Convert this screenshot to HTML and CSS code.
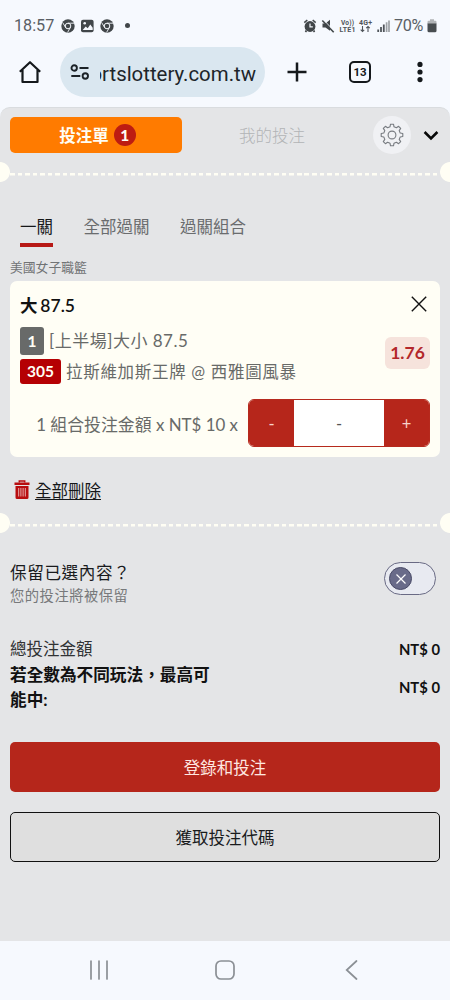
FILE: index.html
```html
<!DOCTYPE html>
<html lang="zh-Hant">
<head>
<meta charset="utf-8">
<title>投注單</title>
<link rel="stylesheet" href="styles.css">
</head>
<body>
<div class="screen">
  <header class="status">
    <span class="clock">18:57</span>
    <svg class="status-left" width="68" height="16" viewBox="0 0 68 16">
      <g id="chrome"><circle cx="7" cy="8" r="6.7" fill="#414649"/><circle cx="7" cy="8" r="2.8" fill="none" stroke="#f6f9fe" stroke-width="1"/><path d="M7 5.2h6M4.6 9.4 1.6 4.5M9.4 9.4 6.6 14.4" stroke="#f6f9fe" stroke-width=".9"/></g>
      <rect x="20" y="1.800" width="12.600" height="12.400" rx="2" fill="#414649"/><circle cx="23.700" cy="5.200" r="1.300" fill="#f6f9fe"/><path d="m21.700 12 3-3.600 2 1.800 2.600-3.700 2.400 3.300V12z" fill="#f6f9fe"/>
      <use href="#chrome" x="39"/>
    </svg>
    <i class="status-dot"></i>
    <svg class="status-right" width="88" height="18" viewBox="0 0 88 18">
      <g fill="#414649"><circle cx="7" cy="9.500" r="5.400"/><path d="m.8 5 3-2.600 1 1.200-3 2.600zM13.200 5l-3-2.600-1 1.200 3 2.600zM2.500 13l1.600 1.200-1 1.200-1.300-1zM11.500 13l-1.600 1.200 1 1.200 1.300-1z"/></g>
      <path d="M7 6.500v3.300h2.800" fill="none" stroke="#f6f9fe" stroke-width="1.200"/>
      <path d="M19.500 6.500h3l4.500-3.700v11l-4.500-3.400h-3z" fill="#414649"/><path d="m20.600 3 11 11.300" stroke="#f6f9fe" stroke-width="1"/><path d="m19.300 3.500 11.400 11.700" stroke="#414649" stroke-width="1.600"/>
      <g font-family="Roboto, sans-serif" font-weight="700" fill="#50555a"><text x="38" y="7.800" font-size="6.600" textLength="13">Vo))</text><text x="36.500" y="15" font-size="7" textLength="16">LTE1</text><text x="56" y="7.800" font-size="7" textLength="13">4G+</text></g>
      <path d="M59.500 9v5.500m-1.800-1.800 1.800 1.800 1.700-1.700M65 15V9.500m-1.800 1.700L65 9.500l1.800 1.700" fill="none" stroke="#50555a" stroke-width="1.100"/>
      <path d="M75.200 12.500V15M78 10v5M80.800 7.500V15" stroke="#50555a" stroke-width="1.800"/><path d="M83.600 5.300V15M86 3.500V15" stroke="#9da1a5" stroke-width="1.700"/>
    </svg>
    <span class="percent">70%</span>
    <svg width="10" height="16" viewBox="0 0 10 16"><path d="M3 1.200h4v1.500h1.300q1.200 0 1.200 1.200V6H.5V3.900q0-1.200 1.200-1.200H3z" fill="#b1b4b7"/><path d="M.5 5.500h9v7.300q0 1.500-1.500 1.500H2Q.5 14.300.5 12.800z" fill="#484d50"/></svg>
  </header>

  <nav class="browser">
    <svg class="home" width="24" height="24" viewBox="0 0 24 24"><path d="M1.800 11.700 12 2.200l10.200 9.500M4.500 10v12h15V10" fill="none" stroke="#15191c" stroke-width="2.200" stroke-linejoin="round"/></svg>
    <div class="address">
      <svg width="20" height="16" viewBox="0 0 20 16" fill="none" stroke="#1b2227" stroke-width="1.900"><circle cx="4.200" cy="4" r="2.700"/><path d="M9.500 4h9M1.300 12h9"/><circle cx="15.300" cy="12" r="2.700"/></svg>
      <span class="url"><span>ortslottery.com.tw</span></span>
    </div>
    <svg class="plus" width="20" height="20" viewBox="0 0 20 20"><path d="M10 .5v19M.5 10h19" stroke="#15191c" stroke-width="2.500"/></svg>
    <span class="tabs-count">13</span>
    <svg class="more" width="6" height="22" viewBox="0 0 6 22" fill="#15191c"><circle cx="3" cy="3.400" r="2.600"/><circle cx="3" cy="11" r="2.600"/><circle cx="3" cy="18.600" r="2.600"/></svg>
  </nav>

  <main class="page">
    <div class="slip-head">
      <div class="slip-tab">投注單<b class="count">1</b></div>
      <div class="my-bets">我的投注</div>
      <div class="gear"><svg width="24" height="24" viewBox="-12 -12 24 24" fill="none" stroke="#777b80" stroke-width="1.100" stroke-linejoin="round"><circle r="3.900"/><path d="M-2-8.200-1.500-10.800H1.500L2-8.200 4.400-7.200 6.600-8.700 8.700-6.600 7.200-4.400 8.200-2 10.800-1.500V1.500L8.200 2 7.200 4.400 8.700 6.600 6.600 8.700 4.400 7.200 2 8.200 1.500 10.800H-1.500L-2 8.200-4.400 7.200-6.600 8.700-8.700 6.600-7.200 4.400-8.200 2-10.800 1.500V-1.500L-8.200-2-7.200-4.400-8.700-6.600-6.600-8.700-4.400-7.200Z"/></svg></div>
      <svg class="chev" width="16" height="11" viewBox="0 0 16 11"><path d="m1.600 2 6.400 6.400L14.400 2" fill="none" stroke="#080808" stroke-width="2.600"/></svg>
    </div>
    <div class="perforation"></div>

    <div class="modes">
      <span class="mode active">一關</span><span class="mode">全部過關</span><span class="mode">過關組合</span>
    </div>
    <div class="league">美國女子職籃</div>

    <section class="card">
      <div class="card-title"><b>大 87.5</b><svg width="16" height="16" viewBox="0 0 16 16"><path d="m.8.800 14.400 14.400M15.200.800.800 15.200" stroke="#111" stroke-width="1.400"/></svg></div>
      <div class="pick">
        <div class="pick-lines">
          <div class="pick-line"><b class="tag gray">1</b><span class="market">[上半場]大小 87.5</span></div>
          <div class="pick-line second"><b class="tag red">305</b><span class="teams">拉斯維加斯王牌 @ 西雅圖風暴</span></div>
        </div>
        <b class="odds">1.76</b>
      </div>
      <div class="stake">
        <span class="stake-label">1 組合投注金額 x NT$ 10 x</span>
        <div class="stepper"><span class="step">-</span><span class="amount">-</span><span class="step">+</span></div>
      </div>
    </section>

    <div class="clear">
      <svg width="16" height="20" viewBox="0 0 16 20"><path d="M5.300 2.500V1h5.400v1.500" fill="none" stroke="#b80d10" stroke-width="1.500"/><path d="M.5 2.500h15V5H.5zM1.500 6h13v11.500q0 1.500-1.500 1.500H3q-1.500 0-1.500-1.500z" fill="#b80d10"/><path d="M4.700 8v8.500M6.900 8v8.500M9.100 8v8.500M11.300 8v8.500" stroke="#f3d6d6" stroke-width=".8"/></svg>
      <span>全部刪除</span>
    </div>
    <div class="perforation lower"></div>

    <div class="keep">
      <div><div class="keep-title">保留已選內容？</div><div class="keep-sub">您的投注將被保留</div></div>
      <div class="toggle"><span class="knob"><svg width="12" height="12" viewBox="0 0 12 12"><path d="m1.500 1.500 9 9M10.500 1.500l-9 9" stroke="#fff" stroke-width="1.200"/></svg></span></div>
    </div>

    <div class="totals">
      <div class="total"><span>總投注金額</span><b>NT$ 0</b></div>
      <div class="total max"><strong>若全數為不同玩法，最高可能中:</strong><b>NT$ 0</b></div>
    </div>
    <div class="button primary">登錄和投注</div>
    <div class="button outline">獲取投注代碼</div>
  </main>

  <footer class="system-nav">
    <svg width="20" height="20" viewBox="0 0 20 20"><path d="M2 1v18M10 1v18M18 1v18" stroke="#8b9095" stroke-width="1.700" stroke-linecap="round"/></svg>
    <svg width="20" height="20" viewBox="0 0 20 20"><rect x="1" y="1" width="18" height="18" rx="5" fill="none" stroke="#8b9095" stroke-width="1.700"/></svg>
    <svg width="20" height="20" viewBox="0 0 20 20"><path d="M15.500 1 5.700 10l9.800 9" fill="none" stroke="#8b9095" stroke-width="1.700" stroke-linecap="round"/></svg>
  </footer>
</div>
</body>
</html>
```
FILE: styles.css
```css
* { box-sizing: border-box; }
body { margin: 0; background: #f6f9fe; }
svg { display: block; flex: none; }
.screen { width: 450px; height: 1000px; display: flex; flex-direction: column; overflow: hidden; font-family: Lato, "Noto Sans CJK TC", sans-serif; font-size: 16.5px; white-space: nowrap; }

.status { height: 36px; padding: 15px 13px 0 14px; display: flex; align-items: center; font: 16.2px/22px Roboto, sans-serif; color: #5a6065; }
.clock { width: 47px; }
.status-left { width: 68px; }
.status-dot { width: 5px; height: 5px; margin-left: -4px; border-radius: 50%; background: #414649; }
.status-right { margin-left: auto; margin-right: -1px; }
.percent { margin: 0 2px 0 4px; width: 31px; letter-spacing: -.4px; }

.browser { height: 71px; padding: 0 27px 0 18px; display: flex; align-items: center; }
.address { width: 205px; height: 50px; margin-left: 18px; padding: 0 9px 0 10px; display: flex; align-items: center; background: #dae7f0; border-radius: 25px; }
.url { width: 156px; margin: 4px 0 0 10px; overflow: hidden; display: flex; justify-content: flex-end; font: 20.400px/28px Roboto, sans-serif; color: #1d252a; }
.plus { margin-left: 22px; }
.tabs-count { width: 22px; height: 22px; margin-left: 42px; border: 2px solid #15191c; border-radius: 5px; font: 700 11.5px/18px Roboto, sans-serif; text-align: center; color: #15191c; }
.more { margin-left: auto; }

.page { height: 834px; background: #e4e5e7; border-top: 1px solid #d9dcdf; border-radius: 10px 10px 0 0; }
.slip-head { height: 54px; padding: 0 11px 0 10px; display: flex; align-items: center; }
.slip-tab { width: 172px; height: 36px; background: #ff7b00; border-radius: 5px; color: #fffdf4; font-weight: 700; display: flex; align-items: center; justify-content: center; gap: 5px; padding-left: 3px; }
.count { width: 22px; height: 22px; border-radius: 50%; background: #bd1c12; font-size: 15.5px; line-height: 22px; text-align: center; }
.my-bets { width: 180px; text-align: center; color: #b2b4b6; font-weight: 300; }
.gear { width: 38px; height: 38px; margin-left: 11px; border-radius: 50%; background: #f0f1f4; display: grid; place-items: center; }
.chev { margin-left: auto; }

.perforation { height: 20px; background: radial-gradient(circle at 0 10px, #fffef4 9.500px, transparent 10.300px), radial-gradient(circle at 450px 10px, #fffef4 9.500px, transparent 10.300px), repeating-linear-gradient(90deg, #fffef4 0 4.600px, transparent 4.600px 7.550px) 10px 11px / 430px 2.500px no-repeat; }

.modes { height: 76px; padding: 32px 0 0 20px; display: flex; gap: 30.500px; color: #6a6c6e; line-height: 26px; }
.mode { height: 33px; }
.mode.active { height: 33px; color: #151719; border-bottom: 4px solid #b71916; }
.league { height: 22px; margin-top: -1px; padding-left: 10px; font-size: 12.800px; line-height: 20px; color: #717375; }

.card { width: 430px; height: 176px; margin: 2px 0 0 10px; padding: 12px 10px 0; background: #fffef5; border-radius: 7px; }
.card-title { height: 34px; padding-right: 3px; display: flex; justify-content: space-between; align-items: flex-start; color: #111; font-size: 17.500px; line-height: 26px; }
.card-title b { font-weight: 600; word-spacing: -1.500px; }
.card-title svg { margin-top: 3px; }
.pick { display: flex; justify-content: space-between; }
.pick-lines { color: #686a68; line-height: 28px; }
.pick-line { height: 32px; display: flex; gap: 5px; }
.tag { height: 28px; border-radius: 3px; color: #fffef5; font-size: 15.500px; line-height: 28px; text-align: center; }
.gray { width: 24px; background: #686a69; }
.red { width: 41px; height: 25px; background: #b50003; line-height: 25px; }
.second { line-height: 26px; }
.market { letter-spacing: .5px; font-size: 17px; }
.teams { letter-spacing: .7px; }
.odds { width: 45px; height: 32px; margin-top: 10px; border-radius: 6px; background: #f6e3dc; color: #b3272a; font-size: 17.500px; line-height: 32px; text-align: center; }
.stake { margin-top: 8px; display: flex; justify-content: flex-end; align-items: center; gap: 10px; color: #686a68; }
.stake-label { font-size: 16.900px; }
.stepper { width: 182px; height: 48px; border: 1px solid #b6291d; border-radius: 6px; overflow: hidden; display: flex; }
.step { width: 45px; background: #b6261b; color: #f7d3cb; line-height: 48px; text-align: center; }
.amount { flex: 1; background: #fff; line-height: 48px; text-align: center; color: #555; }

.clear { height: 56px; padding: 22px 0 0 14px; display: flex; gap: 5px; line-height: 24px; color: #151719; }
.clear svg { margin-top: 1px; }
.clear span { text-decoration: underline; text-underline-offset: 2px; }

.keep { height: 104px; padding: 27px 14px 0 10px; display: flex; justify-content: space-between; }
.keep-title { line-height: 26px; font-size: 16.600px; letter-spacing: .6px; color: #191b1d; }
.keep-sub { margin-top: -1px; line-height: 22px; font-size: 14.300px; letter-spacing: .5px; color: #77797b; }
.toggle { width: 52px; height: 33px; margin-top: 2px; padding: 4px; border: 1px solid #696a84; border-radius: 17px; background: #e8eaf1; }
.knob { width: 23px; height: 23px; border: 1px solid #494a67; border-radius: 50%; background: #696b89; display: grid; place-items: center; }

.totals { width: 430px; margin-left: 10px; height: 105px; color: #111; line-height: 25.500px; }
.total { display: flex; justify-content: space-between; align-items: center; }
.total span { color: #303234; }
.total b { font-size: 14.800px; }
.total strong { width: 205px; white-space: normal; font-size: 16.650px; }
.button { width: 430px; height: 50px; margin: 0 0 20px 10px; border-radius: 5px; text-align: center; line-height: 52px; }
.primary { background: #b5261b; color: #ffe8e1; }
.outline { background: #dfdfdf; border: 1px solid #111; line-height: 51px; color: #191b1d; }

.system-nav { height: 59px; padding: 0 89px 2px; display: flex; align-items: center; justify-content: space-between; }
```
